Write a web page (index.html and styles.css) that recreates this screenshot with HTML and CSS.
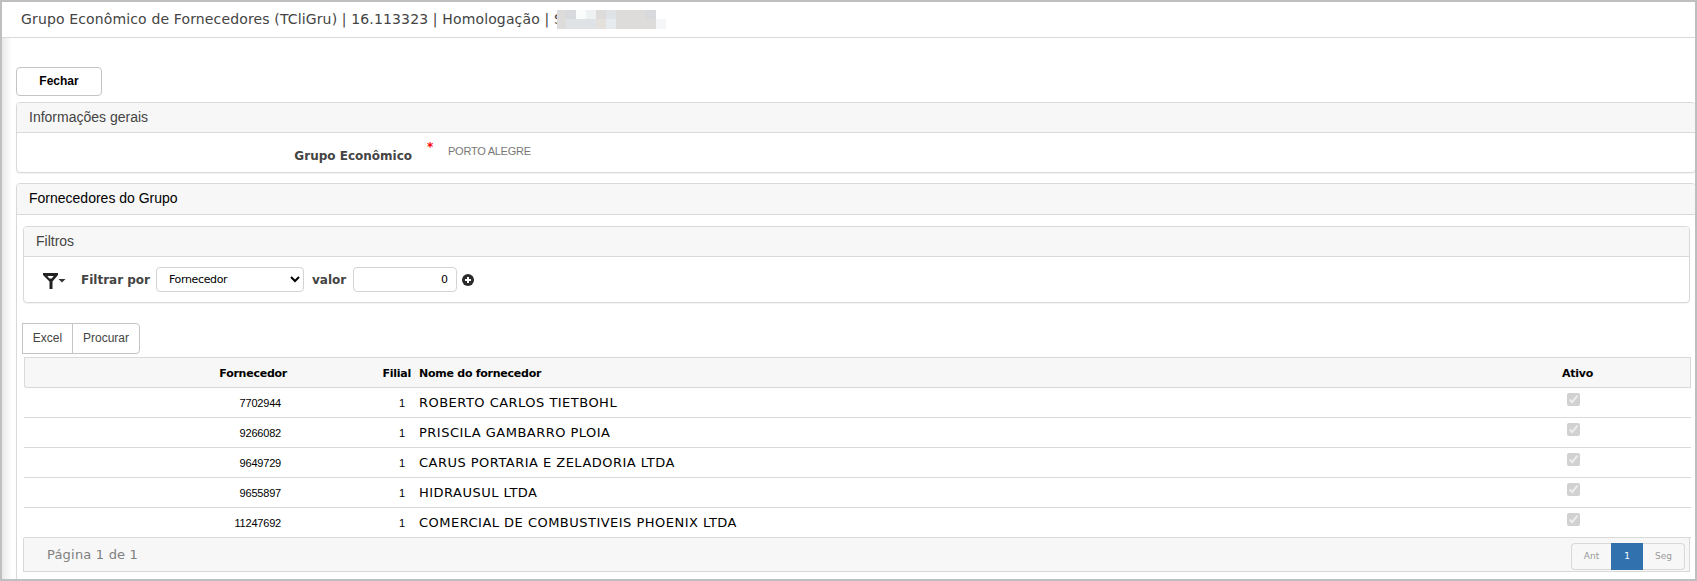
FILE: index.html
```html
<!DOCTYPE html>
<html lang="pt-BR">
<head>
    <meta charset="UTF-8">
    <meta name="viewport" content="width=device-width, initial-scale=1.0">
    <title>Grupo Econômico de Fornecedores</title>
    <link rel="stylesheet" href="styles.css">
</head>
<body>
    <header class="titulo">
        <span class="titulo-texto">Grupo Econômico de Fornecedores (TCliGru) | 16.113323 | Homologação | S</span>
        <div class="mascara">
            <i class="m2"></i><i class="m1"></i><i class="m5"></i><i class="m4"></i><i class="m2"></i><i class="m3"></i><i class="m2"></i><i class="m2"></i><i class="m2"></i><i class="m1"></i><i></i>
            <i class="m2"></i><i class="m3"></i><i class="m3"></i><i class="m3"></i><i class="m6"></i><i class="m7"></i><i class="m2"></i><i class="m2"></i><i class="m2"></i><i class="m2"></i><i class="m8"></i>
        </div>
    </header>
    <main class="conteudo">
        <button class="btn-fechar">Fechar</button>

        <section class="painel painel-info">
            <h2 class="painel-titulo">Informações gerais</h2>
            <div class="info-linha">
                <label class="info-label">Grupo Econômico</label>
                <span class="obrigatorio">*</span>
                <span class="info-valor">PORTO ALEGRE</span>
            </div>
        </section>

        <section class="painel painel-grupo">
            <h2 class="painel-titulo">Fornecedores do Grupo</h2>
            <div class="grupo-corpo">
                <div class="painel painel-filtros">
                    <h2 class="painel-titulo">Filtros</h2>
                    <div class="filtros">
                        <svg class="icone-filtro" width="23" height="17" viewBox="0 0 23 17">
                            <path fill="#222" fill-rule="evenodd" d="M0 0h15v2L9.5 8.5V16h-3V8.500L0 2zM4.300 3l2 2.500h2.400l2-2.500z"/>
                            <path fill="#333" d="M15.500 6h7l-3.500 3.500z"/>
                        </svg>
                        <label class="filtro-label">Filtrar por</label>
                        <select class="campo campo-select">
                            <option>Fornecedor</option>
                        </select>
                        <label class="filtro-label filtro-valor">valor</label>
                        <input class="campo campo-valor" type="text" value="0">
                        <svg class="icone-mais" width="12" height="12" viewBox="0 0 12 12">
                            <circle cx="6" cy="6" r="6" fill="#2b2b2b"/>
                            <path fill="#fff" d="M5 3h2v2h2v2H7v2H5V7H3V5h2z"/>
                        </svg>
                    </div>
                </div>

                <div class="acoes">
                    <button class="btn-excel">Excel</button>
                    <button class="btn-procurar">Procurar</button>
                </div>

                <table class="tabela">
                    <colgroup>
                        <col class="col-fornecedor">
                        <col class="col-filial">
                        <col>
                        <col class="col-ativo">
                    </colgroup>
                    <thead>
                        <tr>
                            <th class="num">Fornecedor</th>
                            <th class="num">Filial</th>
                            <th>Nome do fornecedor</th>
                            <th>Ativo</th>
                        </tr>
                    </thead>
                    <tbody>
                        <tr>
                            <td class="num">7702944</td>
                            <td class="num">1</td>
                            <td class="nome">ROBERTO CARLOS TIETBOHL</td>
                            <td class="ativo"><input type="checkbox" checked disabled></td>
                        </tr>
                        <tr>
                            <td class="num">9266082</td>
                            <td class="num">1</td>
                            <td class="nome">PRISCILA GAMBARRO PLOIA</td>
                            <td class="ativo"><input type="checkbox" checked disabled></td>
                        </tr>
                        <tr>
                            <td class="num">9649729</td>
                            <td class="num">1</td>
                            <td class="nome">CARUS PORTARIA E ZELADORIA LTDA</td>
                            <td class="ativo"><input type="checkbox" checked disabled></td>
                        </tr>
                        <tr>
                            <td class="num">9655897</td>
                            <td class="num">1</td>
                            <td class="nome">HIDRAUSUL LTDA</td>
                            <td class="ativo"><input type="checkbox" checked disabled></td>
                        </tr>
                        <tr>
                            <td class="num">11247692</td>
                            <td class="num">1</td>
                            <td class="nome">COMERCIAL DE COMBUSTIVEIS PHOENIX LTDA</td>
                            <td class="ativo"><input type="checkbox" checked disabled></td>
                        </tr>
                    </tbody>
                </table>

                <div class="rodape">
                    <span class="pagina">Página 1 de 1</span>
                    <div class="paginacao">
                        <span class="pag-item pag-ant">Ant</span>
                        <span class="pag-item pag-atual">1</span>
                        <span class="pag-item pag-seg">Seg</span>
                    </div>
                </div>
            </div>
        </section>
    </main>
</body>
</html>
```

FILE: styles.css
```css
* {
    box-sizing: border-box;
}
body {
    margin: 0;
    height: 581px;
    border: 2px solid #bfbfbf;
    overflow: hidden;
    background-color: #fff;
    font-family: Verdana, "DejaVu Sans", sans-serif;
    color: #444;
    display: flex;
    flex-direction: column;
}
.titulo {
    flex: none;
    height: 36px;
    padding-left: 19px;
    border-bottom: 1px solid #d9d9d9;
    display: flex;
    align-items: flex-start;
    white-space: nowrap;
}
.titulo-texto {
    width: 536px;
    overflow: hidden;
    font-size: 14px;
    letter-spacing: 0.14px;
    line-height: 34px;
}
.mascara {
    margin-top: 8px;
    display: grid;
    grid-template-columns: 9px repeat(10, 10px);
    grid-template-rows: 9px 10px;
}
.m1 { background-color: #d8d9dd; }
.m2 { background-color: #dddcdb; }
.m3 { background-color: #e0e3e6; }
.m4 { background-color: #eff2f2; }
.m5 { background-color: #fafbfb; }
.m6 { background-color: #e4e0db; }
.m7 { background-color: #e5ebee; }
.m8 { background-color: #f5f6f7; }
.conteudo {
    flex: 1;
    min-height: 0;
    padding: 29px 0 0 14px;
    background: linear-gradient(to right, #e9e9e9, #fff 10px);
}
button {
    font-family: Arial, "Liberation Sans", sans-serif;
    font-size: 12px;
    background-color: #fff;
    border: 1px solid #c4c4c4;
    padding: 0;
    color: #444;
}
.btn-fechar {
    display: block;
    width: 86px;
    height: 29px;
    border-radius: 4px;
    font-weight: bold;
    color: #000;
    padding-bottom: 2px;
}
.painel {
    background-color: #fff;
    border: 1px solid #d9d9d9;
    border-radius: 4px;
    box-shadow: 0 1px 1px rgba(0, 0, 0, 0.05);
}
.painel-titulo {
    margin: 0;
    height: 30px;
    padding-left: 12px;
    border-bottom: 1px solid #d9d9d9;
    border-radius: 3px 3px 0 0;
    background-color: #f7f7f7;
    font-family: Arial, "Liberation Sans", sans-serif;
    font-size: 14px;
    font-weight: normal;
    line-height: 29px;
}
.painel-info {
    height: 71px;
    margin: 6px -1px 0 0;
}
.info-linha {
    display: flex;
    align-items: flex-start;
}
.info-label {
    width: 395px;
    padding-top: 15px;
    text-align: right;
    font-size: 12px;
    font-weight: bold;
    line-height: 16px;
}
.obrigatorio {
    width: 21px;
    margin-left: 15px;
    padding-top: 6px;
    color: #f00;
    font-size: 12px;
    font-weight: bold;
    line-height: 16px;
}
.info-valor {
    padding-top: 10px;
    color: #777;
    font-family: Arial, "Liberation Sans", sans-serif;
    font-size: 11px;
    letter-spacing: -0.25px;
    line-height: 16px;
}
.painel-grupo {
    height: 420px;
    margin: 10px -1px 0 0;
}
.painel-grupo > .painel-titulo {
    height: 31px;
    color: #000;
}
.grupo-corpo {
    padding: 11px 5px 0 6px;
}
.painel-filtros {
    height: 77px;
}
.filtros {
    display: flex;
    align-items: center;
    height: 45px;
    padding-left: 19px;
}
.icone-filtro {
    margin-right: 15px;
    margin-top: 4px;
}
.filtro-label {
    width: 75px;
    font-size: 12px;
    font-weight: bold;
    white-space: nowrap;
}
.campo {
    height: 25px;
    border: 1px solid #d4d4d4;
    border-radius: 4px;
    background-color: #fff;
    color: #000;
    font-family: Verdana, "DejaVu Sans", sans-serif;
    font-size: 11px;
}
.campo-select {
    width: 148px;
    padding-left: 8px;
    letter-spacing: -0.35px;
}
.filtro-valor {
    width: 33px;
    margin: 0 8px;
}
.campo-valor {
    width: 104px;
    padding: 0 8px;
    text-align: right;
}
.icone-mais {
    margin-left: 5px;
}
.acoes {
    display: flex;
    height: 31px;
    margin: 20px 0 3px -1px;
}
.btn-excel {
    width: 51px;
}
.btn-procurar {
    width: 68px;
    margin-left: -1px;
    border-radius: 0 4px 4px 0;
}
.acoes button {
    padding-bottom: 2px;
}
.tabela {
    width: 1667px;
    margin-left: 1px;
    table-layout: fixed;
    border-collapse: separate;
    border-spacing: 0;
}
.col-fornecedor {
    width: 265px;
}
.col-filial {
    width: 124px;
}
.col-ativo {
    width: 136px;
}
th, td {
    height: 30px;
    padding: 0 6px;
    border-bottom: 1px solid #d9d9d9;
    text-align: left;
}
th {
    height: 31px;
    padding-top: 2px;
    border-top: 1px solid #d9d9d9;
    background-color: #f7f7f7;
    color: #000;
    font-size: 11px;
    letter-spacing: -0.25px;
}
th:first-child {
    border-left: 1px solid #d9d9d9;
    border-bottom-left-radius: 3px;
}
th:last-child {
    border-right: 1px solid #d9d9d9;
    padding-left: 7px;
}
th.num {
    padding-right: 2px;
    text-align: right;
}
td {
    background-color: #fff;
    color: #000;
    font-size: 13px;
    letter-spacing: 0.48px;
}
td.num {
    padding-right: 8px;
    text-align: right;
    font-family: Arial, "Liberation Sans", sans-serif;
    font-size: 11px;
    letter-spacing: -0.2px;
}
td.ativo {
    padding: 0 0 6px 12px;
}
.ativo input {
    display: block;
    width: 13px;
    height: 13px;
    margin: 0;
}
.rodape {
    display: flex;
    justify-content: space-between;
    height: 34px;
    border: 1px solid #d9d9d9;
    border-top: none;
    background-color: #f7f7f7;
    padding: 5px 4px 0 23px;
}
.pagina {
    color: #808080;
    font-size: 13px;
    letter-spacing: 0.2px;
    line-height: 24px;
}
.paginacao {
    display: flex;
    height: 27px;
}
.pag-item {
    border: 1px solid #d9d9d9;
    color: #999;
    font-size: 9px;
    line-height: 25px;
    text-align: center;
}
.pag-ant {
    width: 40px;
    border-right: none;
    border-radius: 4px 0 0 4px;
}
.pag-atual {
    width: 32px;
    border-color: #3071ae;
    background-color: #3071ae;
    color: #fff;
}
.pag-seg {
    width: 42px;
    border-left: none;
    border-radius: 0 4px 4px 0;
}
```
